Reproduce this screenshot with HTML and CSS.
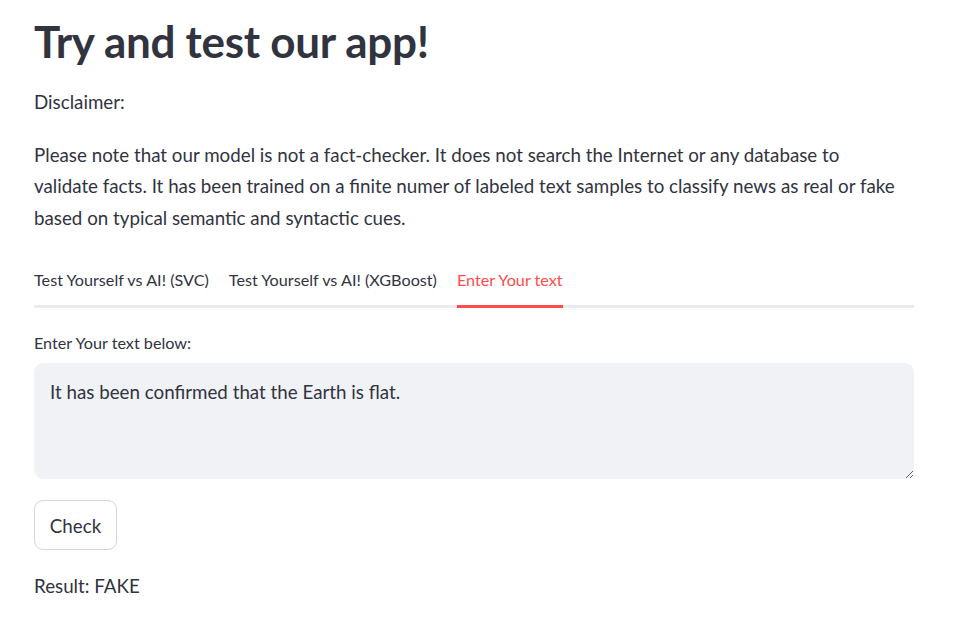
FILE: index.html
```html
<!DOCTYPE html>
<html>
<head>
<meta charset="utf-8">
<link rel="stylesheet" href="styles.css">
</head>
<body>
<main class="page">
  <h1 class="title">Try and test our app!</h1>
  <p class="text disclaimer">Disclaimer:</p>
  <p class="text para">Please note that our model is not a fact-checker. It does not search the Internet or any database to<br>validate facts. It has been trained on a finite numer of labeled text samples to classify news as real or fake<br>based on typical semantic and syntactic cues.</p>
  <div class="tabs">
    <div class="tab">Test Yourself vs AI! (SVC)</div>
    <div class="tab">Test Yourself vs AI! (XGBoost)</div>
    <div class="tab active">Enter Your text</div>
  </div>
  <label class="label" for="inp">Enter Your text below:</label>
  <textarea id="inp" class="area">It has been confirmed that the Earth is flat.</textarea>
  <button class="btn">Check</button>
  <p class="text result">Result: FAKE</p>
</main>
</body>
</html>
```
FILE: styles.css
```css
html, body {
  margin: 0;
  padding: 0;
  background: #ffffff;
}
body {
  font-family: Lato, "Noto Sans", sans-serif;
  color: #31333f;
}
.page {
  width: 880px;
  padding: 0 0 0 34px;
  display: flex;
  flex-direction: column;
  align-items: flex-start;
}
.title {
  margin: 13px 0 0 0;
  font-size: 44px;
  line-height: 56px;
  font-weight: 700;
  letter-spacing: -0.3px;
}
.text {
  margin: 0;
  font-size: 18.75px;
  line-height: 31.5px;
}
.disclaimer {
  margin-top: 17px;
}
.para {
  margin-top: 21px;
}
.tabs {
  margin-top: 27px;
  width: 880px;
  display: flex;
  gap: 20px;
  border-bottom: 3px solid #ebebed;
}
.tab {
  font-size: 16.2px;
  line-height: 24px;
  padding: 8px 0 13px 0;
  margin-bottom: -3px;
  border-bottom: 3px solid transparent;
}
.tab.active {
  color: #ff4b4b;
  border-bottom-color: #ff4b4b;
}
.label {
  margin-top: 23px;
  font-size: 16.2px;
  line-height: 24px;
}
.area {
  box-sizing: border-box;
  margin-top: 8px;
  width: 880px;
  height: 116px;
  padding: 16px 16px;
  border: none;
  border-radius: 9px;
  background: #f0f2f6;
  color: #31333f;
  font-family: Lato, "Noto Sans", sans-serif;
  font-size: 18.75px;
  line-height: 26px;
  outline: none;
  resize: vertical;
}
.btn {
  margin-top: 21px;
  width: 83px;
  height: 50px;
  border: 1px solid #d6d6d9;
  border-radius: 9px;
  background: #ffffff;
  color: #31333f;
  font-family: Lato, "Noto Sans", sans-serif;
  font-size: 18.75px;
  padding: 0;
}
.result {
  margin-top: 20px;
}
```
